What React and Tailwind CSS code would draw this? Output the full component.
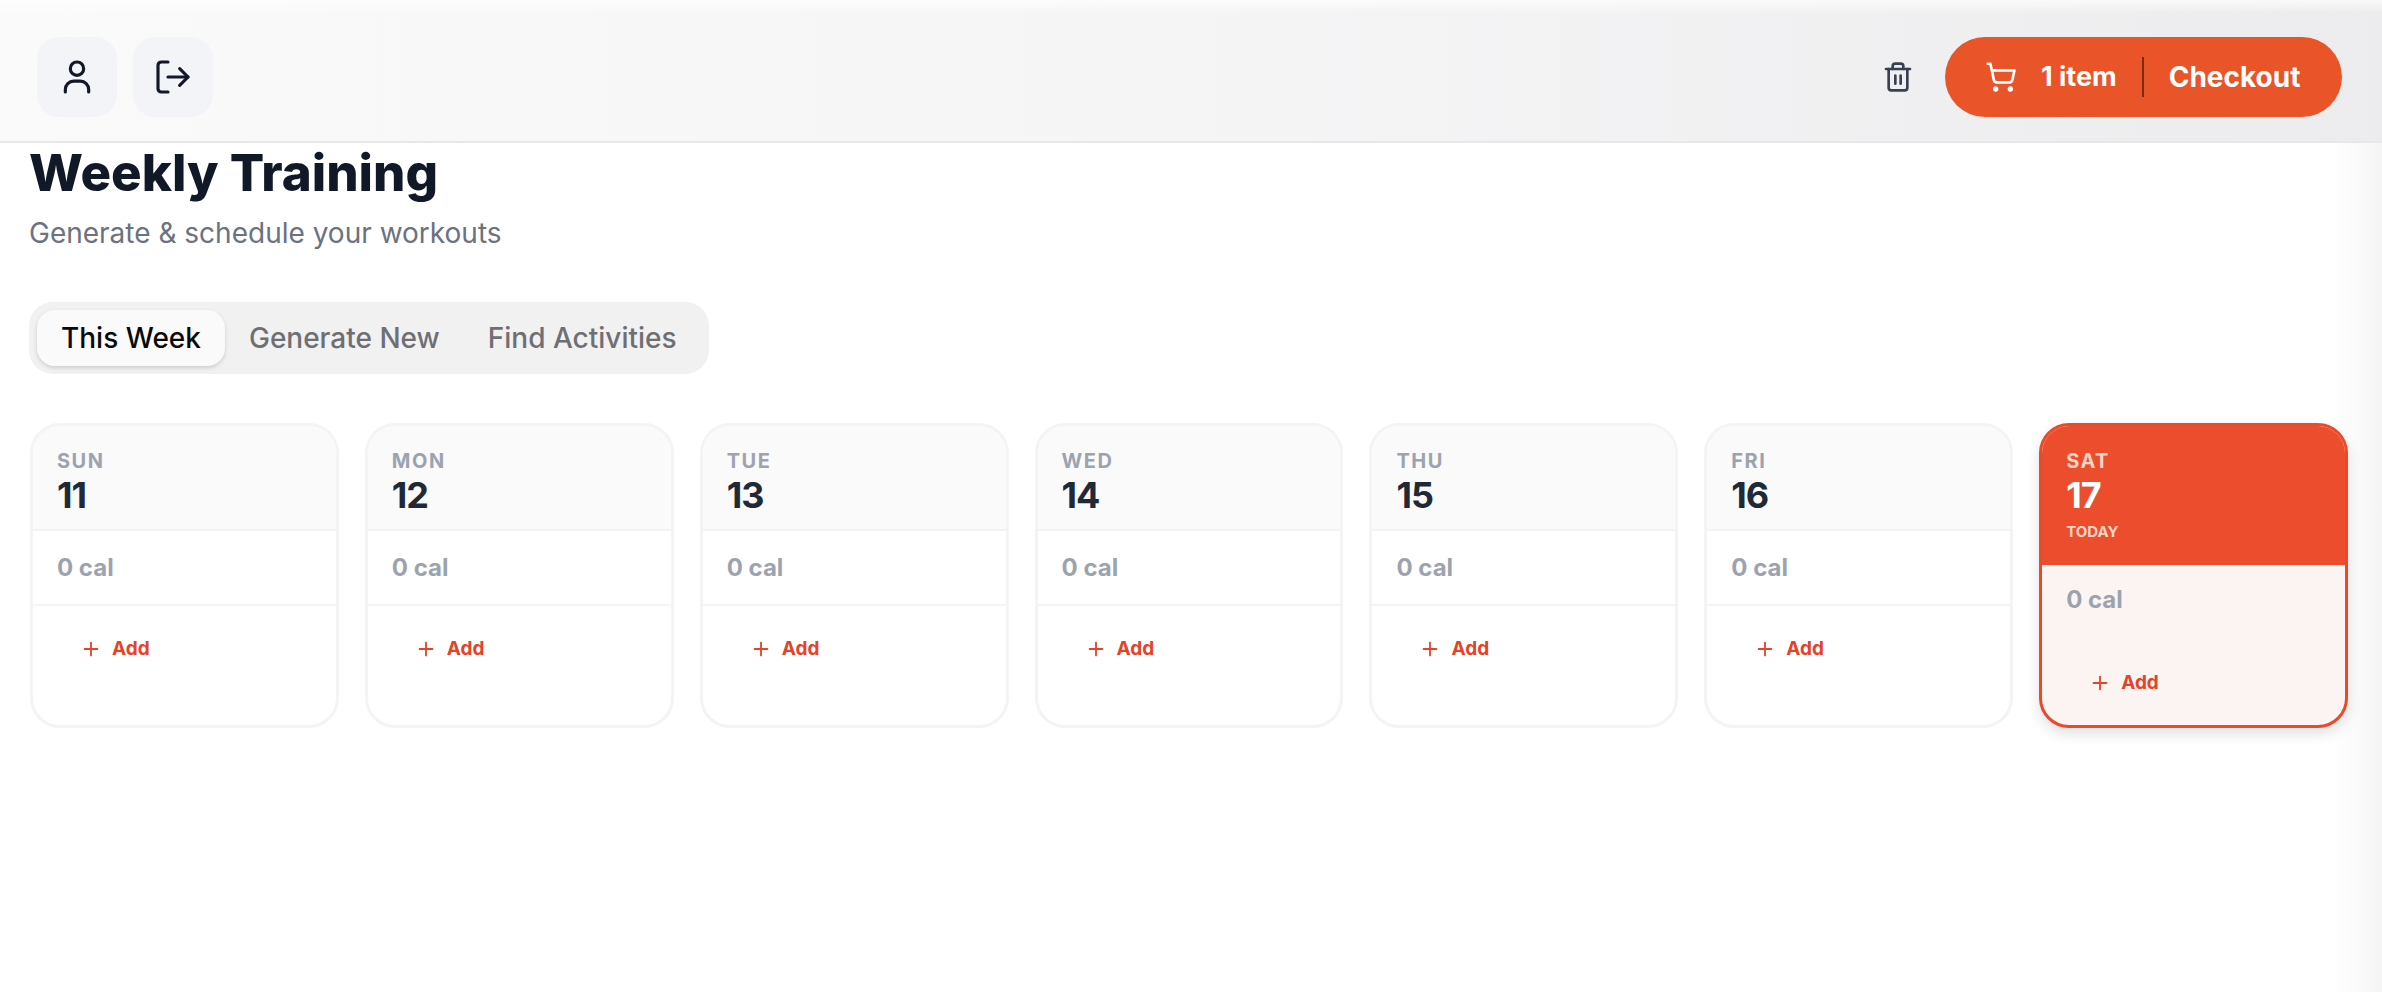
import React from 'react';
import { LogOut, Trash2, ShoppingCart, Plus } from 'lucide-react';

const days = [
  { name: 'SUN', date: 11 },
  { name: 'MON', date: 12 },
  { name: 'TUE', date: 13 },
  { name: 'WED', date: 14 },
  { name: 'THU', date: 15 },
  { name: 'FRI', date: 16 },
  { name: 'SAT', date: 17, today: true },
];

const UserIcon = () => (
  <svg width="40" height="40" viewBox="0 0 24 24" fill="none" stroke="currentColor" strokeWidth="1.9" strokeLinecap="round" strokeLinejoin="round">
    <circle cx="12" cy="7" r="4" />
    <path d="M19 21v-1.5a5 5 0 0 0-5-5h-4a5 5 0 0 0-5 5V21" />
  </svg>
);

const IconButton = ({ children }) => (
  <button className="w-[80px] h-[80px] rounded-[22px] bg-[#f3f4f8] flex items-center justify-center text-[#111827]">
    {children}
  </button>
);

const DayCard = ({ day }) => (
  <div className={`flex flex-col overflow-hidden rounded-[30px] border-[3px] ${day.today ? 'border-[#ea4a2a] bg-[#fcf4f2] shadow-[0_6px_14px_rgba(0,0,0,0.12)]' : 'border-[#f4f4f5] bg-white'}`}>
    <div className={`px-[24px] pt-[23px] ${day.today ? 'h-[139px] bg-[#ec4e2d]' : 'h-[105px] bg-[#fafafb] border-b-2 border-[#f4f4f5]'}`}>
      <div className={`text-[20px] leading-[24px] font-bold tracking-[1.5px] ${day.today ? 'text-[#fbd5c9]' : 'text-[#9ca3af]'}`}>{day.name}</div>
      <div className={`mt-[2px] text-[36px] leading-[40px] font-bold tracking-[-1px] ${day.today ? 'text-white' : 'text-[#1f2937]'}`}>{day.date}</div>
      {day.today && <div className="mt-[7px] text-[15px] leading-[20px] font-bold text-[#fbd5c9]">TODAY</div>}
    </div>
    <div className={`px-[24px] text-[24px] font-bold text-[#9ca3af] ${day.today ? 'h-[60px] pt-[20px] leading-[30px]' : 'h-[75px] pt-[22px] leading-[30px] border-b-2 border-[#f4f4f5]'}`}>0 cal</div>
    <div className={`flex items-center gap-[10px] pl-[47px] text-[#e4432a] ${day.today ? 'pt-[44px]' : 'pt-[29px]'}`}>
      <Plus size={22} strokeWidth={2} />
      <span className="text-[19px] leading-[28px] font-bold">Add</span>
    </div>
  </div>
);

export default function App() {
  return (
    <div className="relative w-[2382px] h-[992px] overflow-hidden bg-white font-['Inter',sans-serif]">
      <div className="absolute top-[143px] right-0 bottom-0 w-[50px] bg-gradient-to-r from-transparent to-[#f5f5f5] pointer-events-none" />
      <header className="relative h-[143px] pt-[13px] border-b-2 border-[#e5e7eb] bg-gradient-to-r from-[#fafafa] via-[#f5f5f6] to-[#ececee] flex items-center justify-between pl-[37px] pr-[40px]">
        <div className="absolute top-0 left-0 right-0 h-[14px] bg-gradient-to-b from-white/70 to-transparent" />
        <div className="flex gap-[16px]">
          <IconButton><UserIcon /></IconButton>
          <IconButton><LogOut size={40} strokeWidth={1.9} /></IconButton>
        </div>
        <div className="flex items-center gap-[31px]">
          <Trash2 size={32} strokeWidth={2} className="text-[#374151]" />
          <button className="w-[397px] h-[80px] rounded-full bg-[#e95429] flex items-center pl-[40px] text-white font-bold text-[26px]">
            <ShoppingCart size={32} strokeWidth={2} />
            <span className="ml-[24px] text-[27px]">1 item</span>
            <span className="mx-[25px] w-[2px] h-[40px] bg-[#7a2a18]" />
            <span className="text-[28px]">Checkout</span>
          </button>
        </div>
      </header>
      <main className="relative pl-[29px] pr-[34px]">
        <h1 className="mt-[2px] text-[51px] leading-[56px] font-extrabold text-[#111827]">Weekly Training</h1>
        <p className="mt-[14px] text-[28px] leading-[36px] text-[#6b7280]">Generate &amp; schedule your workouts</p>
        <div className="mt-[51px] inline-flex h-[72px] items-center rounded-[24px] bg-[#f1f1f2] px-[8px]">
          <div className="h-[56px] px-[24px] flex items-center rounded-[18px] bg-[#fafafa] shadow-[0_2px_4px_rgba(0,0,0,0.15)] text-[28px] font-medium text-[#0a0a0a]">This Week</div>
          <div className="px-[24px] text-[28px] font-medium text-[#6f6f73]">Generate New</div>
          <div className="px-[24px] text-[28px] font-medium text-[#6f6f73]">Find Activities</div>
        </div>
        <div className="mt-[49px] ml-[1px] grid grid-cols-7 gap-[26px] h-[305px]">
          {days.map(d => <DayCard key={d.name} day={d} />)}
        </div>
      </main>
    </div>
  );
}
